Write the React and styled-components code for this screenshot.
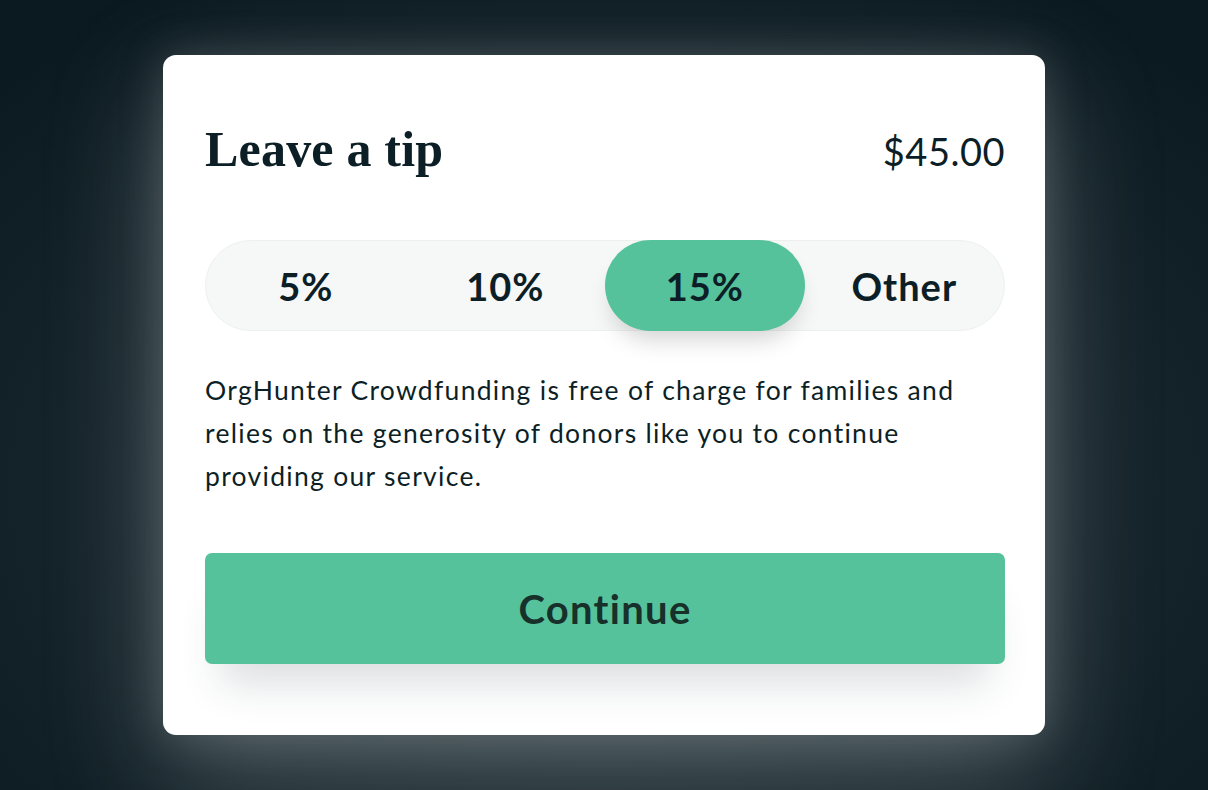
import React, { useState } from 'react';
import styled, { createGlobalStyle } from 'styled-components';

const GlobalStyle = createGlobalStyle`
  html, body {
    margin: 0;
    padding: 0;
    height: 100%;
  }
  body {
    background: #0b1a20;
    font-family: Lato, "Noto Sans", sans-serif;
    color: #0d1f26;
  }
`;

const Page = styled.div`
  width: 1208px;
  height: 790px;
  display: flex;
  align-items: center;
  justify-content: center;
  overflow: hidden;
  background: radial-gradient(ellipse 70% 75% at 50% 62%, #2c3a3f 0%, #16252b 60%, #0b1a20 100%);
`;

const Card = styled.div`
  width: 882px;
  height: 680px;
  box-sizing: border-box;
  padding: 64px 40px 0 42px;
  background: #fff;
  border-radius: 13px;
  box-shadow: 0 40px 110px rgba(150, 160, 165, 0.45), 0 0 40px rgba(120, 130, 135, 0.35);
  display: flex;
  flex-direction: column;
`;

const Header = styled.div`
  display: flex;
  align-items: center;
  justify-content: space-between;
  height: 60px;
`;

const Title = styled.h1`
  margin: 0;
  font-family: "Liberation Serif", "Times New Roman", serif;
  font-weight: 700;
  font-size: 50px;
  letter-spacing: 0.2px;
  color: #0d1f26;
`;

const Amount = styled.div`
  font-size: 38px;
  font-weight: 400;
  letter-spacing: 0.5px;
  color: #0d1f26;
  margin-top: 4px;
`;

const Segments = styled.div`
  margin-top: 61px;
  height: 91px;
  display: grid;
  grid-template-columns: repeat(4, 1fr);
  background: #f6f7f7;
  border: 1px solid #eef0f0;
  box-sizing: border-box;
  border-radius: 46px;
`;

const Segment = styled.button`
  border: none;
  margin: -1px 0;
  height: 91px;
  border-radius: 46px;
  background: ${p => (p.$active ? '#55c29c' : 'transparent')};
  box-shadow: ${p => (p.$active ? '0 16px 24px -8px rgba(0,0,0,0.18)' : 'none')};
  font-family: Lato, "Noto Sans", sans-serif;
  font-weight: 700;
  font-size: 38px;
  letter-spacing: 1px;
  color: #0d1f26;
  cursor: pointer;
  padding: 0;
`;

const Blurb = styled.p`
  margin: 38px 0 0;
  width: 780px;
  font-size: 26.5px;
  letter-spacing: 1.3px;
  line-height: 43px;
  color: #0d1f26;
`;

const ContinueButton = styled.button`
  margin-top: 55px;
  height: 111px;
  border: none;
  border-radius: 7px;
  background: #55c29c;
  font-family: Lato, "Noto Sans", sans-serif;
  font-weight: 700;
  font-size: 40px;
  letter-spacing: 1.3px;
  color: #17302a;
  cursor: pointer;
  box-shadow: 0 36px 40px -16px rgba(40, 55, 60, 0.16);
`;

const options = ['5%', '10%', '15%', 'Other'];

export default function App() {
  const [selected, setSelected] = useState('15%');

  return (
    <Page>
      <GlobalStyle />
      <Card>
        <Header>
          <Title>Leave a tip</Title>
          <Amount>$45.00</Amount>
        </Header>
        <Segments>
          {options.map(o => (
            <Segment key={o} $active={o === selected} onClick={() => setSelected(o)}>
              {o}
            </Segment>
          ))}
        </Segments>
        <Blurb>
          OrgHunter Crowdfunding is free of charge for families and relies on the generosity of donors like you to continue providing our service.
        </Blurb>
        <ContinueButton>Continue</ContinueButton>
      </Card>
    </Page>
  );
}
